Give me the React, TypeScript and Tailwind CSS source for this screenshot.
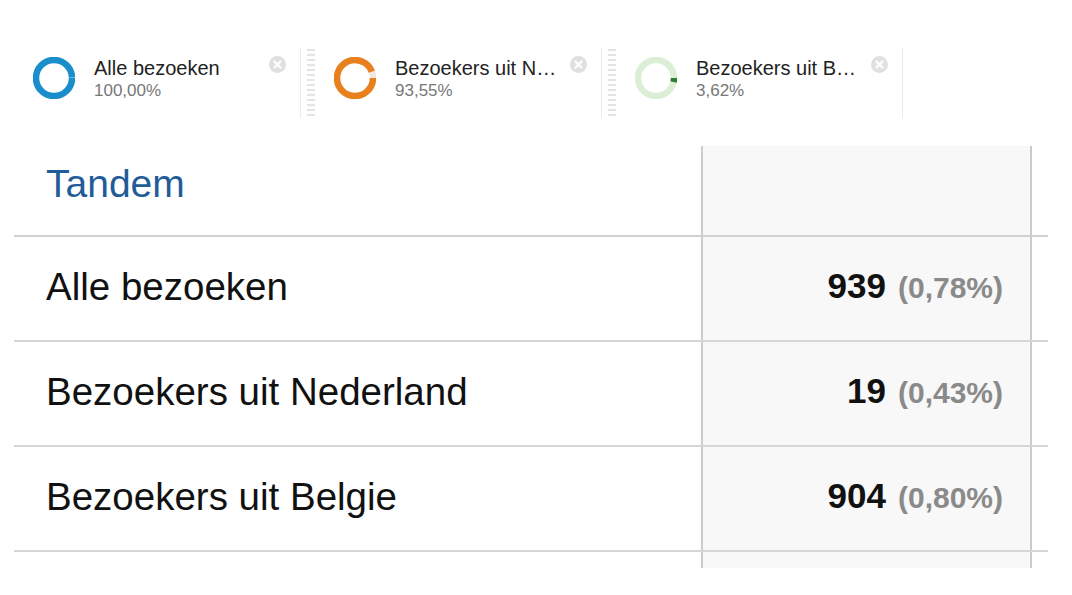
import React from 'react';

type Segment = {
  label: string;
  pct: string;
  value: number;
  color: string;
  track: string;
};

const segments: Segment[] = [
  { label: 'Alle bezoeken', pct: '100,00%', value: 0.99, color: '#1a8dcb', track: 'transparent' },
  { label: 'Bezoekers uit Nederland', pct: '93,55%', value: 0.9355, color: '#e9801e', track: '#f4e7dc' },
  { label: 'Bezoekers uit Belgie', pct: '3,62%', value: 0.0362, color: '#2f7d32', track: '#dcefd6' },
];

const rows = [
  { label: 'Alle bezoeken', count: '939', share: '(0,78%)' },
  { label: 'Bezoekers uit Nederland', count: '19', share: '(0,43%)' },
  { label: 'Bezoekers uit Belgie', count: '904', share: '(0,80%)' },
];

function Donut({ value, color, track }: { value: number; color: string; track: string }) {
  const c = 2 * Math.PI * 18;
  return (
    <svg width="42" height="42" viewBox="0 0 42 42" className="shrink-0">
      <circle cx="21" cy="21" r="18" fill="none" stroke={track} strokeWidth="6.5" />
      <circle
        cx="21"
        cy="21"
        r="18"
        fill="none"
        stroke={color}
        strokeWidth="6.5"
        strokeDasharray={`${value * c} ${c}`}
      />
    </svg>
  );
}

function CloseDot() {
  return (
    <svg width="17" height="17" viewBox="0 0 17 17" className="shrink-0">
      <circle cx="8.5" cy="8.5" r="8.5" fill="#e0e0e0" />
      <path d="M5.5 5.5l6 6M11.5 5.5l-6 6" stroke="#fff" strokeWidth="2.2" strokeLinecap="round" />
    </svg>
  );
}

function Handle() {
  return (
    <div className="flex flex-col gap-[3px] pt-[1px]">
      {Array.from({ length: 14 }).map((_, i) => (
        <div key={i} className="w-[8px] h-[2px] bg-[#e4e4e4]" />
      ))}
    </div>
  );
}

function Chip({ seg, first }: { seg: Segment; first: boolean }) {
  return (
    <div className="w-[301px] h-[70px] flex items-start border-r border-[#ebebeb] shrink-0">
      <div className="w-[33px] h-full pl-[6px]">{!first && <Handle />}</div>
      <div className="mt-[9px]">
        <Donut value={seg.value} color={seg.color} track={seg.track} />
      </div>
      <div className="ml-[19px] mt-[9px] w-[165px]">
        <div className="text-[20px] leading-[22px] text-[#222] truncate">{seg.label}</div>
        <div className="mt-[2px] text-[17px] leading-[20px] text-[#777]">{seg.pct}</div>
      </div>
      <div className="ml-auto mr-[14px] mt-[8px]">
        <CloseDot />
      </div>
    </div>
  );
}

export default function App() {
  return (
    <div className="w-[1072px] h-[595px] bg-white overflow-hidden font-['Liberation_Sans',Arial,sans-serif]">
      <div className="flex pt-[48px]">
        {segments.map((s, i) => (
          <Chip key={s.label} seg={s} first={i === 0} />
        ))}
      </div>

      <div className="ml-[14px] w-[1034px] mt-[28px] h-[422px] overflow-hidden">
        <div className="flex h-[91px] border-b-2 border-[#d0d0d0]">
          <div className="flex-1 pl-[32px] pt-[18px] text-[39px] leading-none text-[#1f5c98]">Tandem</div>
          <div className="w-[331px] border-x-2 border-[#cccccc] bg-[#f8f8f8]" />
          <div className="w-[16px]" />
        </div>
        {rows.map((r) => (
          <div key={r.label} className="flex h-[105px] border-b-2 border-[#d6d6d6]">
            <div className="flex-1 pl-[32px] pt-[31px] text-[38.5px] leading-none text-[#111]">{r.label}</div>
            <div className="w-[331px] border-x-2 border-[#cccccc] bg-[#f8f8f8] pr-[27px] pt-[31px] text-right leading-none font-bold">
              <span className="text-[35px] text-[#111]">{r.count}</span>
              <span className="ml-[12px] text-[30px] text-[#8a8a8a]">{r.share}</span>
            </div>
            <div className="w-[16px]" />
          </div>
        ))}
        <div className="flex h-[40px]">
          <div className="flex-1" />
          <div className="w-[331px] border-x-2 border-[#cccccc] bg-[#f8f8f8]" />
          <div className="w-[16px]" />
        </div>
      </div>
    </div>
  );
}
